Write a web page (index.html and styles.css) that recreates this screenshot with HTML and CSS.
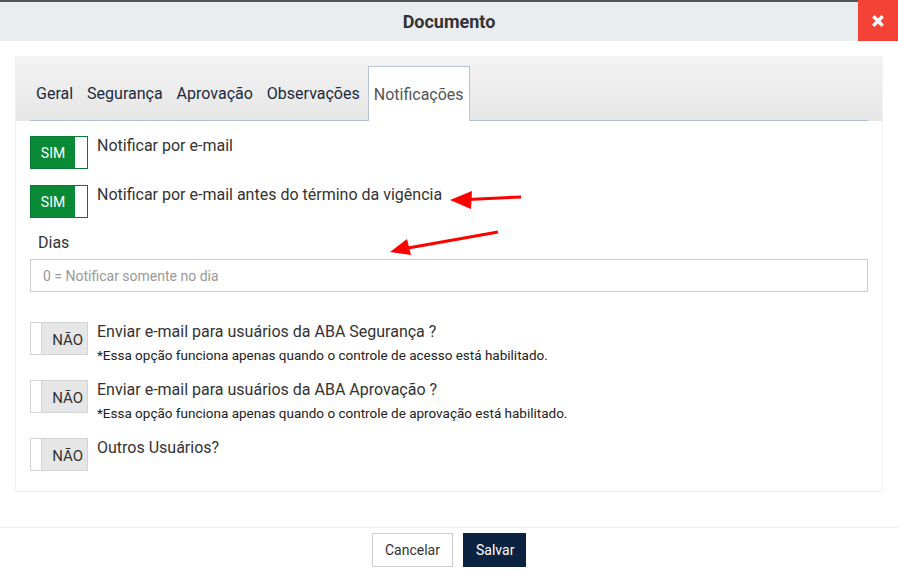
FILE: index.html
```html
<!DOCTYPE html>
<html lang="pt-BR">
<head>
<meta charset="utf-8">
<title>Documento</title>
<link rel="stylesheet" href="styles.css">
</head>
<body>
<div class="modal">
  <header class="modal-header">
    <h1 class="modal-title">Documento</h1>
    <button class="close-btn" aria-label="Fechar">
      <svg width="12" height="12" viewBox="0 0 12 12"><path d="M2.5 2.5 L9.5 9.5 M9.5 2.5 L2.5 9.5" stroke="#fff" stroke-width="3.4" stroke-linecap="square"/></svg>
    </button>
  </header>
  <main class="modal-body">
    <section class="panel">
      <div class="tabs-bar">
        <ul class="tabs">
          <li class="tab">Geral</li>
          <li class="tab">Segurança</li>
          <li class="tab">Aprovação</li>
          <li class="tab">Observações</li>
          <li class="tab active">Notificações</li>
        </ul>
      </div>
      <div class="panel-body">
        <div class="opt-row">
          <span class="toggle on"><span class="toggle-label">SIM</span><span class="knob"></span></span>
          <div class="opt-text"><div class="opt-title">Notificar por e-mail</div></div>
        </div>
        <div class="opt-row">
          <span class="toggle on"><span class="toggle-label">SIM</span><span class="knob"></span></span>
          <div class="opt-text"><div class="opt-title">Notificar por e-mail antes do término da vigência</div></div>
        </div>
        <div class="field">
          <label class="field-label">Dias</label>
          <div class="input">0 = Notificar somente no dia</div>
        </div>
        <div class="opt-row off-row first-off">
          <span class="toggle off"><span class="knob"></span><span class="toggle-label">NÃO</span></span>
          <div class="opt-text">
            <div class="opt-title">Enviar e-mail para usuários da ABA Segurança ?</div>
            <div class="opt-note">*Essa opção funciona apenas quando o controle de acesso está habilitado.</div>
          </div>
        </div>
        <div class="opt-row off-row">
          <span class="toggle off"><span class="knob"></span><span class="toggle-label">NÃO</span></span>
          <div class="opt-text">
            <div class="opt-title">Enviar e-mail para usuários da ABA Aprovação ?</div>
            <div class="opt-note">*Essa opção funciona apenas quando o controle de aprovação está habilitado.</div>
          </div>
        </div>
        <div class="opt-row off-row">
          <span class="toggle off"><span class="knob"></span><span class="toggle-label">NÃO</span></span>
          <div class="opt-text"><div class="opt-title">Outros Usuários?</div></div>
        </div>
      </div>
    </section>
  </main>
  <footer class="modal-footer">
    <button class="btn btn-default">Cancelar</button>
    <button class="btn btn-primary">Salvar</button>
  </footer>
  <svg class="arrows" width="898" height="572" viewBox="0 0 898 572">
    <line x1="521" y1="197" x2="468" y2="199.5" stroke="#f00" stroke-width="3"/>
    <polygon points="450,200 472,191 471,209" fill="#f00"/>
    <line x1="498" y1="232" x2="408" y2="248" stroke="#f00" stroke-width="3"/>
    <polygon points="390,252 407,239 411,255" fill="#f00"/>
  </svg>
</div>
</body>
</html>
```
FILE: styles.css
```css
* { box-sizing: border-box; }
html, body { margin: 0; padding: 0; background: #fff; }
body {
  font-family: Roboto, "Liberation Sans", Arial, sans-serif;
  color: #333;
  width: 898px;
  height: 572px;
  overflow: hidden;
}
.modal { position: relative; width: 898px; height: 572px; }
.modal-header {
  height: 41px;
  border-top: 2px solid #555;
  background: #eaedf0;
  display: flex;
  align-items: center;
  justify-content: center;
  position: relative;
}
.modal-title {
  margin: 0;
  font-size: 18px;
  font-weight: 700;
  color: #333;
  line-height: 1;
}
.close-btn {
  position: absolute;
  right: 0;
  top: -2px;
  width: 40px;
  height: 41px;
  border: 0;
  padding: 0;
  background: #f44336;
  display: flex;
  align-items: center;
  justify-content: center;
}
.modal-body { padding: 15px 15px 0; height: 486px; }
.panel {
  border: 1px solid #f2f2f2;
  border-top: 0;
  width: 868px;
}
.tabs-bar {
  height: 65px;
  padding: 10px 14px 0;
  background: linear-gradient(#f3f3f3, #e6e6e6);
}
.tabs {
  list-style: none;
  margin: 0;
  padding: 0;
  display: flex;
  height: 55px;
  border-bottom: 1px solid #adc0d6;
}
.tab {
  padding: 0 5px;
  margin-right: 2px;
  height: 54px;
  display: flex;
  align-items: center;
  font-size: 16px;
  color: #1c2a40;
  border: 1px solid transparent;
  border-bottom: 0;
}
.tab.active {
  background: #fff;
  border-color: #b6c6d8;
  color: #555;
  height: 55px;
  margin-bottom: -1px;
}
.panel-body { padding: 15px 14px 20px; }
.opt-row { display: flex; align-items: flex-start; margin-bottom: 16px; }
.toggle {
  width: 58px;
  height: 33px;
  display: flex;
  flex: none;
  font-size: 14px;
}
.toggle.on { border: 1px solid #0a7a2f; background: #fff; }
.toggle.on .toggle-label {
  width: 44px;
  background: #088a36;
  color: #fff;
  display: flex;
  align-items: center;
  justify-content: center;
  padding-top: 1px;
}
.toggle.on .knob { flex: 1; background: #fff; }
.toggle.off { border: 1px solid #d4d4d4; }
.toggle.off .knob { width: 11px; background: #fff; border-right: 1px solid #d4d4d4; }
.toggle.off .toggle-label {
  flex: 1;
  background: #e6e6e6;
  color: #333;
  font-size: 15px;
  display: flex;
  align-items: center;
  justify-content: flex-end;
  padding: 2px 4px 0 0;
}
.opt-text { margin-left: 9px; }
.opt-title { font-size: 16px; line-height: 18px; color: #333; padding-top: 1px; }
.opt-note { font-size: 13.5px; line-height: 16px; color: #222; margin-top: 6px; }
.field { margin-top: 1px; }
.field-label { display: block; font-size: 16px; color: #333; padding-left: 8px; line-height: 18px; margin-bottom: 7px; }
.input {
  height: 33px;
  border: 1px solid #ccc;
  padding: 0 12px;
  display: flex;
  align-items: center;
  font-size: 14px;
  color: #999;
  width: 838px;
}
.off-row { height: 38px; margin-bottom: 20px; }
.first-off { margin-top: 30px; }
.off-row:last-child { margin-bottom: 0; height: 33px; }
.modal-footer {
  border-top: 1px solid #eee;
  display: flex;
  justify-content: center;
  gap: 10px;
  padding-top: 5px;
  height: 45px;
}
.btn {
  font-family: Roboto, "Liberation Sans", Arial, sans-serif;
  font-size: 14px;
  height: 34px;
  padding: 0 12px;
  border-radius: 0;
  cursor: pointer;
}
.btn-default { background: #fff; border: 1px solid #ccc; color: #333; width: 81px; }
.btn-primary { background: #0b2341; border: 1px solid #0b2341; color: #fff; width: 63px; }
.arrows { position: absolute; left: 0; top: 0; pointer-events: none; }
```
